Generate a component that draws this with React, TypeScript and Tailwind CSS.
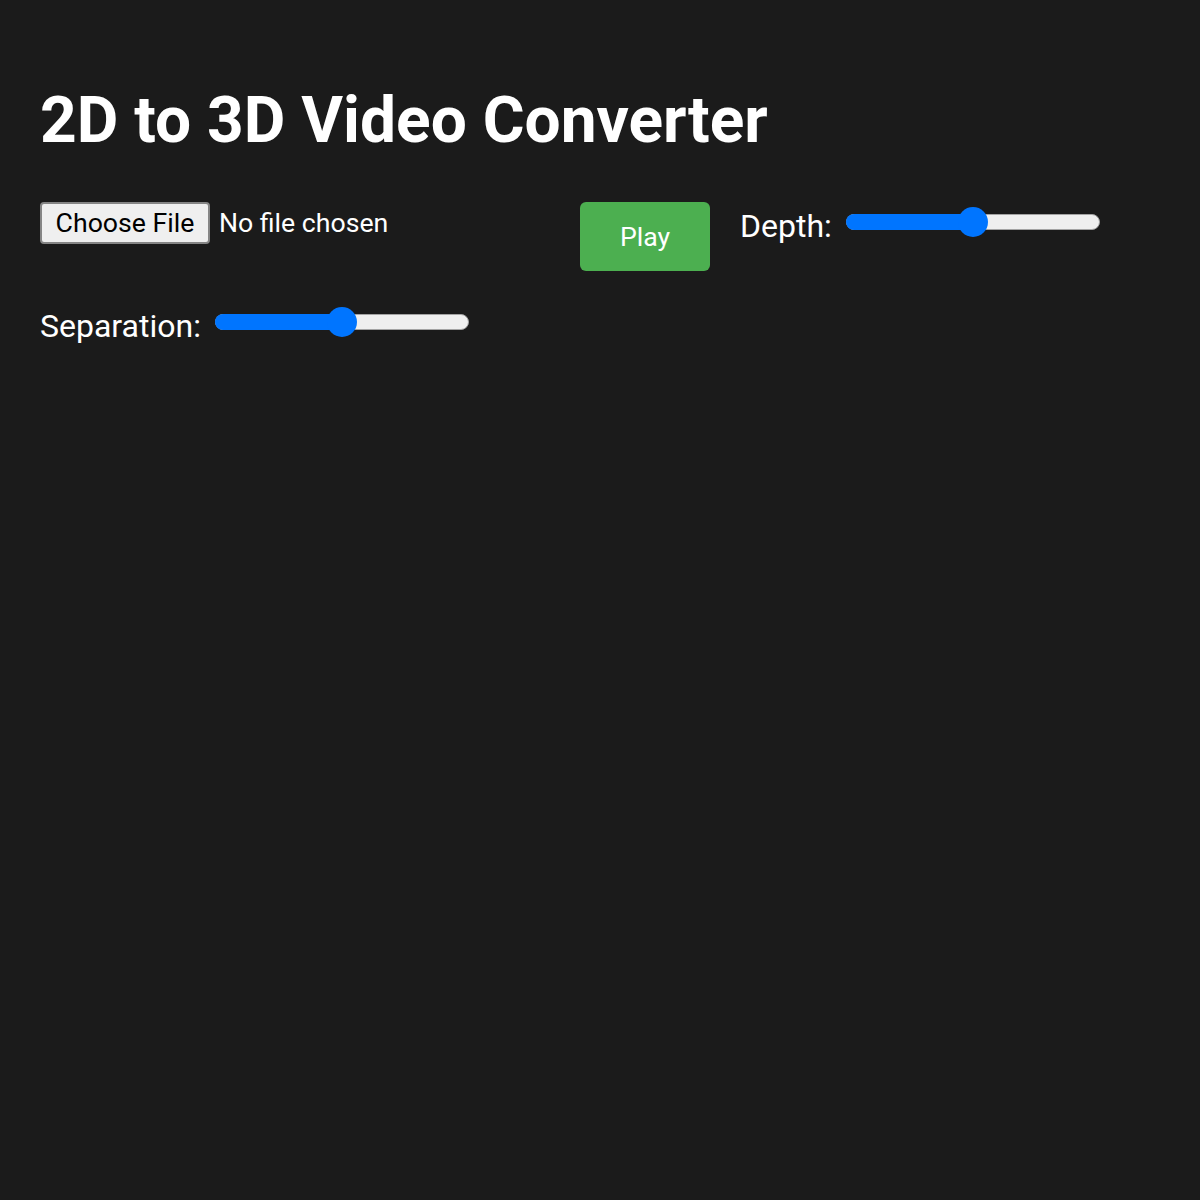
import { useState } from "react";

const TRACK_W = 254;
const THUMB = 30;

function Slider({ value }: { value: number }) {
  // thumb centre travels between THUMB/2 and TRACK_W - THUMB/2, like the native range input
  const centre = THUMB / 2 + (value / 100) * (TRACK_W - THUMB);

  return (
    <div className="relative flex h-[30px] w-[254px] shrink-0 items-center">
      <div className="h-[16px] w-full rounded-full border border-[#a3a3a3] bg-[#efefef]" />
      <div
        className="absolute left-0 h-[16px] rounded-full bg-[#0075ff]"
        style={{ width: centre + 4 }}
      />
      <div
        className="absolute top-0 h-[30px] w-[30px] rounded-full bg-[#0075ff]"
        style={{ left: centre - THUMB / 2 }}
      />
    </div>
  );
}

function RangeField({ label, value }: { label: string; value: number }) {
  return (
    <label className="flex items-start gap-[14px]">
      <span className="pt-[6px] text-[32px] leading-[37px]">{label}</span>
      <div className="mt-[5px]">
        <Slider value={value} />
      </div>
    </label>
  );
}

export default function App() {
  const [depth] = useState(50);
  const [separation] = useState(50);

  return (
    <div className="min-h-screen bg-[#1b1b1b] px-10 pt-10 font-['Roboto',sans-serif] text-white">
      <h1 className="mt-[43px] mb-[44px] text-[64px] font-bold leading-[75px]">
        2D to 3D Video Converter
      </h1>

      <div className="flex flex-wrap items-start gap-x-[30px] gap-y-[31px]">
        <div className="flex w-[510px] items-center gap-[9px]">
          <button className="flex h-[42px] w-[170px] items-center justify-center rounded-[4px] border-2 border-[#858585] bg-[#efefef] text-[26.67px] leading-[31px] text-black">
            Choose File
          </button>
          <span className="text-[26.67px] leading-[31px]">No file chosen</span>
        </div>

        <button className="h-[69px] w-[130px] rounded-[6px] bg-[#4caf50] pt-[2px] text-[26.67px] leading-[31px] text-white">
          Play
        </button>

        <RangeField label="Depth:" value={depth} />
        <RangeField label="Separation:" value={separation} />
      </div>
    </div>
  );
}
